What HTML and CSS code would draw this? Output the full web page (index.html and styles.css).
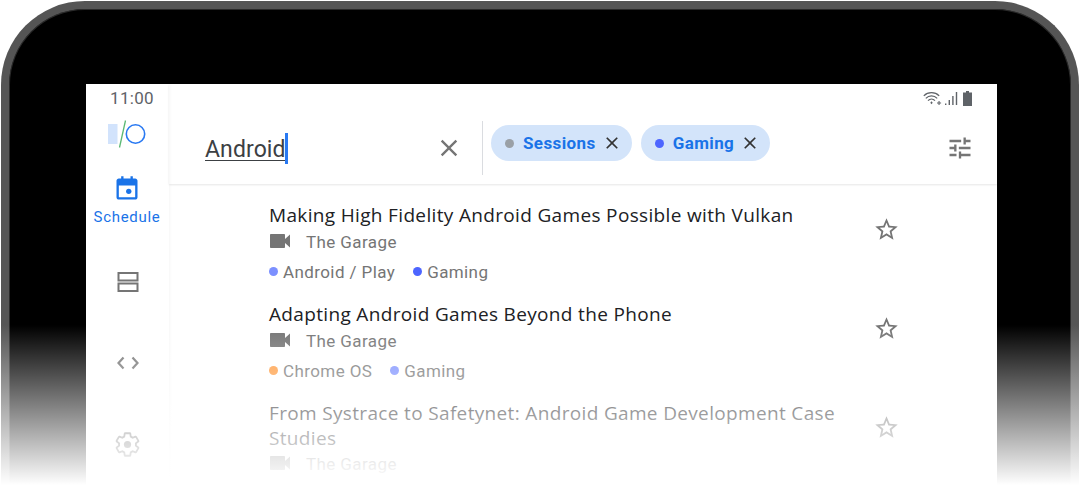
FILE: index.html
```html
<!DOCTYPE html>
<html lang="en">
<head>
<meta charset="UTF-8">
<title>Search</title>
<link rel="stylesheet" href="styles.css">
</head>
<body>
<div class="device">
    <div class="screen">
        <div class="rail">
            <div class="clock">11:00</div>
            <svg class="logo" width="40" height="28" viewBox="0 0 40 28">
                <rect x="1" y="4" width="9.5" height="20" fill="#d2e3fc"/>
                <path d="M18.5 0.5L12.5 27.5" stroke="#5bb974" stroke-width="1.3" fill="none"/>
                <circle cx="28.5" cy="14" r="9.2" stroke="#2979f2" stroke-width="1.6" fill="none"/>
            </svg>
            <div class="nav-item active">
                <svg class="icon-cal" viewBox="0 0 24 24"><path fill="#1a73e8" d="M7 1h2v2h6V1h2v2h2c1.1 0 2 .9 2 2v14c0 1.1-.9 2-2 2H5c-1.100 0-2-.9-2-2V5c0-1.100.9-2 2-2h2V1zM5 9v10h14V9H5z"/><circle cx="13.500" cy="14" r="2.300" fill="#1a73e8"/></svg>
                <span>Schedule</span>
            </div>
            <div class="nav-item">
                <svg class="icon" viewBox="0 0 24 24"><path fill="none" stroke="#757575" stroke-width="2" d="M2.500 3h19v7.500h-19zM2.500 13.500h19V21h-19z"/></svg>
            </div>
            <div class="nav-item">
                <svg class="icon" viewBox="0 0 24 24"><path fill="none" stroke="#757575" stroke-width="2.200" d="M7.500 6.500L2.500 12l5 5.500M16.500 6.500l5 5.500-5 5.500"/></svg>
            </div>
            <div class="nav-item">
                <svg class="icon-gear" viewBox="0 0 24 24"><path fill="none" stroke="#757575" stroke-width="1.600" d="M19.430 12.980c.04-.32.07-.64.07-.98s-.03-.66-.07-.98l2.110-1.650c.19-.15.24-.42.12-.64l-2-3.460c-.12-.22-.39-.3-.61-.22l-2.490 1c-.52-.4-1.080-.73-1.690-.98l-.38-2.650C14.460 2.180 14.250 2 14 2h-4c-.25 0-.46.18-.49.42l-.38 2.650c-.61.25-1.170.59-1.690.98l-2.490-1c-.23-.09-.49 0-.61.22l-2 3.460c-.13.22-.07.49.12.64l2.110 1.650c-.04.32-.07.65-.07.98s.03.66.07.98l-2.110 1.650c-.19.15-.24.42-.12.64l2 3.460c.12.22.39.3.61.22l2.490-1c.52.4 1.080.73 1.690.98l.38 2.650c.03.24.24.42.49.42h4c.25 0 .46-.18.49-.42l.38-2.650c.61-.25 1.170-.59 1.690-.98l2.490 1c.23.09.49 0 .61-.22l2-3.460c.12-.22.07-.49-.12-.64l-2.110-1.650z"/><circle cx="12" cy="12" r="3.200" fill="#757575"/></svg>
            </div>
        </div>
        <div class="main">
            <div class="header">
                <div class="status">
                    <svg class="st-wifi" width="20" height="15" viewBox="0 0 20 15"><path fill="none" stroke="#5f6368" stroke-width="1.200" d="M.8 4.800C5 .6 12 .6 16.200 4.800M2.800 7.300C6 4.100 11 4.100 14.200 7.300M5 9.700C7 7.700 10 7.700 12 9.700"/><path fill="#5f6368" d="M7.300 11.800L8.500 10.300l1.200 1.500-1.200 1.500zM15.500 10h1.100v4h-1.100zM14 11.500h4.100v1.100H14z"/></svg>
                    <svg class="st-signal" width="13" height="15" viewBox="0 0 13 15"><path fill="#5f6368" d="M0 12.500h1.400V14H0zM3.600 9h1.400v5H3.600zM7.200 5h1.400v9H7.200zM10.800 1h1.400v13h-1.400z"/></svg>
                    <svg width="10" height="15" viewBox="0 0 10 15"><path fill="#5f6368" d="M3 0h3v1.500h3V15H0V1.500h3z"/></svg>
                </div>
                <div class="search">
                    <div class="query"><span class="query-text">Android</span><span class="caret"></span></div>
                    <svg class="clear" viewBox="0 0 24 24"><path fill="#757575" d="M19 6.410L17.590 5 12 10.590 6.410 5 5 6.410 10.590 12 5 17.590 6.410 19 12 13.410 17.590 19 19 17.590 13.410 12z"/></svg>
                    <div class="divider"></div>
                    <div class="chip">
                        <i class="dot gray"></i>
                        <span>Sessions</span>
                        <svg class="chip-x" viewBox="0 0 24 24"><path fill="#333" d="M19 6.410L17.590 5 12 10.590 6.410 5 5 6.410 10.590 12 5 17.590 6.410 19 12 13.410 17.590 19 19 17.590 13.410 12z"/></svg>
                    </div>
                    <div class="chip">
                        <i class="dot indigo"></i>
                        <span>Gaming</span>
                        <svg class="chip-x" viewBox="0 0 24 24"><path fill="#333" d="M19 6.410L17.590 5 12 10.590 6.410 5 5 6.410 10.590 12 5 17.590 6.410 19 12 13.410 17.590 19 19 17.590 13.410 12z"/></svg>
                    </div>
                    <svg class="tune" viewBox="0 0 24 24"><path fill="#757575" d="M3 17v2h6v-2H3zM3 5v2h10V5H3zm10 16v-2h8v-2h-8v-2h-2v6h2zM7 9v2H3v2h4v2h2V9H7zm14 4v-2H11v2h10zm-6-4h2V7h4V5h-4V3h-2v6z"/></svg>
                </div>
            </div>
            <div class="list">
                <div class="row">
                    <div class="info">
                        <div class="title">Making High Fidelity Android Games Possible with Vulkan</div>
                        <div class="room">
                            <svg class="cam" viewBox="0 0 21 14"><path fill="#757575" d="M15 5V1c0-.55-.45-1-1-1H1C.45 0 0 .45 0 1v12c0 .55.45 1 1 1h13c.55 0 1-.45 1-1V9l5 4.500V.5z"/></svg>
                            <span>The Garage</span>
                        </div>
                        <div class="tags">
                            <span class="tag"><i class="tag-dot periwinkle"></i>Android / Play</span>
                            <span class="tag"><i class="tag-dot indigo"></i>Gaming</span>
                        </div>
                    </div>
                    <svg class="star" viewBox="0 0 24 24"><path fill="#757575" d="M22 9.240l-7.190-.62L12 2 9.190 8.630 2 9.240l5.460 4.730L5.820 21 12 17.270 18.180 21l-1.630-7.030L22 9.240zM12 15.400l-3.760 2.270 1-4.280-3.320-2.880 4.380-.38L12 6.100l1.710 4.040 4.380.38-3.320 2.880 1 4.280L12 15.400z"/></svg>
                </div>
                <div class="row">
                    <div class="info">
                        <div class="title">Adapting Android Games Beyond the Phone</div>
                        <div class="room">
                            <svg class="cam" viewBox="0 0 21 14"><path fill="#757575" d="M15 5V1c0-.55-.45-1-1-1H1C.45 0 0 .45 0 1v12c0 .55.45 1 1 1h13c.55 0 1-.45 1-1V9l5 4.500V.5z"/></svg>
                            <span>The Garage</span>
                        </div>
                        <div class="tags">
                            <span class="tag"><i class="tag-dot orange"></i>Chrome OS</span>
                            <span class="tag"><i class="tag-dot periwinkle"></i>Gaming</span>
                        </div>
                    </div>
                    <svg class="star" viewBox="0 0 24 24"><path fill="#757575" d="M22 9.240l-7.190-.62L12 2 9.190 8.630 2 9.240l5.460 4.730L5.820 21 12 17.270 18.180 21l-1.630-7.030L22 9.240zM12 15.400l-3.760 2.270 1-4.280-3.320-2.880 4.380-.38L12 6.100l1.710 4.040 4.380.38-3.320 2.880 1 4.280L12 15.400z"/></svg>
                </div>
                <div class="row">
                    <div class="info">
                        <div class="title">From Systrace to Safetynet: Android Game Development Case Studies</div>
                        <div class="room">
                            <svg class="cam" viewBox="0 0 21 14"><path fill="#757575" d="M15 5V1c0-.55-.45-1-1-1H1C.45 0 0 .45 0 1v12c0 .55.45 1 1 1h13c.55 0 1-.45 1-1V9l5 4.500V.5z"/></svg>
                            <span>The Garage</span>
                        </div>
                    </div>
                    <svg class="star" viewBox="0 0 24 24"><path fill="#757575" d="M22 9.240l-7.190-.62L12 2 9.190 8.630 2 9.240l5.460 4.730L5.820 21 12 17.270 18.180 21l-1.630-7.030L22 9.240zM12 15.400l-3.760 2.270 1-4.280-3.320-2.880 4.380-.38L12 6.100l1.710 4.040 4.380.38-3.320 2.880 1 4.280L12 15.400z"/></svg>
                </div>
            </div>
        </div>
    </div>
</div>
<div class="fade"></div>
</body>
</html>
```

FILE: styles.css
```css
*{
    margin:0;
    padding:0;
    box-sizing:border-box;
}
html,body{
    width:1080px;
    height:485px;
    overflow:hidden;
    background:#fff;
}
body{
    font-family:"Roboto","Liberation Sans",sans-serif;
    padding:1px 1px 0;
}
.device{
    width:1078px;
    height:484px;
    border:8px solid #555;
    border-bottom:0;
    border-radius:84px 84px 0 0;
    background:#000;
    padding:75px 74px 0 77px;
    box-shadow:inset 0 0 0 1px #2a2a2a;
}
.screen{
    display:flex;
    height:100%;
    background:#fff;
    overflow:hidden;
}
/* left rail */
.rail{
    width:83px;
    flex-shrink:0;
    display:flex;
    flex-direction:column;
    align-items:center;
    box-shadow:0 0 4px rgba(0,0,0,.06);
    z-index:1;
}
.clock{
    height:28px;
    line-height:29px;
    font-size:17px;
    letter-spacing:.3px;
    color:#5f6368;
    margin-left:9px;
}
.logo{
    margin-top:8px;
    margin-left:-2px;
    flex-shrink:0;
}
.nav-item{
    height:81.500px;
    flex-shrink:0;
    display:flex;
    flex-direction:column;
    align-items:center;
    justify-content:center;
}
.nav-item.active{
    height:81px;
    margin-top:12px;
    margin-left:-1px;
}
.nav-item span{
    margin-top:5px;
    font-size:15px;
    line-height:18px;
    letter-spacing:.7px;
    color:#1a73e8;
}
.icon{
    width:24px;
    height:24px;
}
.icon-cal{
    width:28px;
    height:28px;
}
.icon-gear{
    width:27px;
    height:27px;
}
/* header */
.main{
    flex:1;
    min-width:0;
}
.header{
    height:100px;
    box-shadow:0 1px 2px rgba(0,0,0,.1);
}
.status{
    height:28px;
    display:flex;
    justify-content:flex-end;
    align-items:center;
    padding-right:24px;
}
.st-wifi{
    margin-right:2px;
}
.st-signal{
    margin-right:5px;
}
.search{
    display:flex;
    align-items:center;
    height:72px;
    padding-left:36px;
}
.query{
    width:80px;
    height:32px;
    display:flex;
    align-items:center;
}
.query-text{
    font-size:23px;
    letter-spacing:.1px;
    line-height:32px;
    padding-top:3px;
    color:#3c4043;
    text-decoration:underline;
    text-decoration-thickness:1px;
    text-underline-offset:3px;
}
.caret{
    width:3px;
    height:31px;
    background:#2979f2;
    margin-left:-1px;
    flex-shrink:0;
}
.clear{
    width:28px;
    height:28px;
    margin-left:150px;
}
.divider{
    width:1px;
    height:54px;
    background:#dadce0;
    margin:0 8px 0 19px;
}
.chip{
    height:36px;
    border-radius:18px;
    background:#d3e4fa;
    display:flex;
    align-items:center;
    padding:0 10px 0 14px;
    margin:-10px 9px 0 0;
    font-size:17px;
    font-weight:700;
    letter-spacing:.4px;
    color:#1a73e8;
}
.dot{
    width:9px;
    height:9px;
    border-radius:50%;
    margin-right:9px;
}
.dot.gray{
    background:#9aa0a6;
}
.chip-x{
    width:20px;
    height:20px;
    margin-left:6px;
}
.tune{
    width:28px;
    height:28px;
    margin-left:auto;
    margin-right:23px;
}
/* session list */
.list{
    padding:19px 97px 0 101px;
}
.row{
    display:flex;
    justify-content:space-between;
    align-items:flex-start;
    height:99px;
}
.info{
    width:575px;
}
.title{
    font-family:"Open Sans","Roboto",sans-serif;
    font-size:19px;
    font-weight:500;
    letter-spacing:.34px;
    line-height:24.500px;
    margin-left:-1px;
    color:#202124;
}
.room{
    display:flex;
    align-items:center;
    height:28px;
    font-size:17px;
    letter-spacing:.4px;
    color:#757575;
}
.cam{
    width:21px;
    height:14px;
    margin-right:15px;
    margin-top:-2px;
}
.tags{
    display:flex;
    height:32px;
    align-items:center;
    margin-left:-1px;
    font-size:17px;
    letter-spacing:.4px;
    color:#757575;
}
.tag{
    display:flex;
    align-items:center;
    margin-right:18px;
}
.tag-dot{
    width:9px;
    height:9px;
    border-radius:50%;
    margin-right:5px;
}
.periwinkle{
    background:#7c90ff;
}
.indigo{
    background:#4d65ff;
}
.orange{
    background:#ff9a3d;
}
.star{
    width:27px;
    height:27px;
    margin-top:13px;
    flex-shrink:0;
}
/* fade to white at the bottom */
.fade{
    position:absolute;
    left:0;
    top:325px;
    width:1080px;
    height:160px;
    background:linear-gradient(to bottom,rgba(255,255,255,0),#fff);
    z-index:5;
}
```
